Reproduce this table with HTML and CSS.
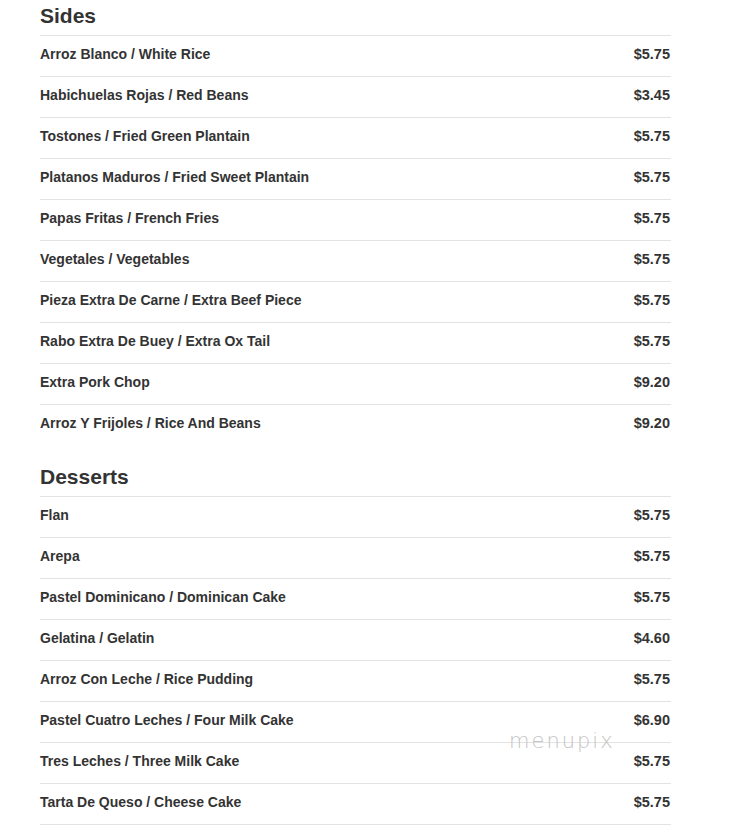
FILE: index.html
```html
<!DOCTYPE html>
<html>
<head>
<meta charset="utf-8">
<link rel="stylesheet" href="styles.css">
</head>
<body>
<div class="menu">
  <section class="section">
    <h2 class="section-title">Sides</h2>
    <div class="item"><span class="name">Arroz Blanco / White Rice</span><span class="price">$5.75</span></div>
    <div class="item"><span class="name">Habichuelas Rojas / Red Beans</span><span class="price">$3.45</span></div>
    <div class="item"><span class="name">Tostones / Fried Green Plantain</span><span class="price">$5.75</span></div>
    <div class="item"><span class="name">Platanos Maduros / Fried Sweet Plantain</span><span class="price">$5.75</span></div>
    <div class="item"><span class="name">Papas Fritas / French Fries</span><span class="price">$5.75</span></div>
    <div class="item"><span class="name">Vegetales / Vegetables</span><span class="price">$5.75</span></div>
    <div class="item"><span class="name">Pieza Extra De Carne / Extra Beef Piece</span><span class="price">$5.75</span></div>
    <div class="item"><span class="name">Rabo Extra De Buey / Extra Ox Tail</span><span class="price">$5.75</span></div>
    <div class="item"><span class="name">Extra Pork Chop</span><span class="price">$9.20</span></div>
    <div class="item"><span class="name">Arroz Y Frijoles / Rice And Beans</span><span class="price">$9.20</span></div>
  </section>
  <section class="section section-next">
    <h2 class="section-title">Desserts</h2>
    <div class="item"><span class="name">Flan</span><span class="price">$5.75</span></div>
    <div class="item"><span class="name">Arepa</span><span class="price">$5.75</span></div>
    <div class="item"><span class="name">Pastel Dominicano / Dominican Cake</span><span class="price">$5.75</span></div>
    <div class="item"><span class="name">Gelatina / Gelatin</span><span class="price">$4.60</span></div>
    <div class="item"><span class="name">Arroz Con Leche / Rice Pudding</span><span class="price">$5.75</span></div>
    <div class="item"><span class="name">Pastel Cuatro Leches / Four Milk Cake</span><span class="price">$6.90</span></div>
    <div class="item"><span class="name">Tres Leches / Three Milk Cake</span><span class="price">$5.75</span></div>
    <div class="item item-last"><span class="name">Tarta De Queso / Cheese Cake</span><span class="price">$5.75</span></div>
  </section>
</div>
<div class="watermark">menupix</div>
</body>
</html>
```
FILE: styles.css
```css
html, body {
  margin: 0;
  padding: 0;
  background: #ffffff;
}
body {
  font-family: "Liberation Sans", Arial, sans-serif;
  color: #333333;
  position: relative;
  height: 826px;
  overflow: hidden;
}
.menu {
  width: 631px;
  padding-left: 40px;
}
.section-next {
  margin-top: 16px;
}
.section-title {
  margin: 0;
  padding: 3px 0 7px;
  font-size: 21px;
  line-height: 25px;
  font-weight: bold;
  color: #333333;
  border-bottom: 1px solid #e3e3e3;
}
.item {
  display: flex;
  justify-content: space-between;
  align-items: baseline;
  padding: 8px 0 12px;
  line-height: 20px;
  font-size: 14px;
  font-weight: bold;
}
.item + .item {
  border-top: 1px solid #e3e3e3;
}
.item-last {
  border-bottom: 1px solid #e3e3e3;
}
.price {
  font-size: 14.5px;
  padding-right: 1px;
}
.watermark {
  position: absolute;
  left: 509px;
  top: 729px;
  font-family: "DejaVu Sans", sans-serif;
  font-weight: 200;
  font-size: 21px;
  letter-spacing: 2px;
  color: #c4c4c4;
  line-height: 24px;
}
```
